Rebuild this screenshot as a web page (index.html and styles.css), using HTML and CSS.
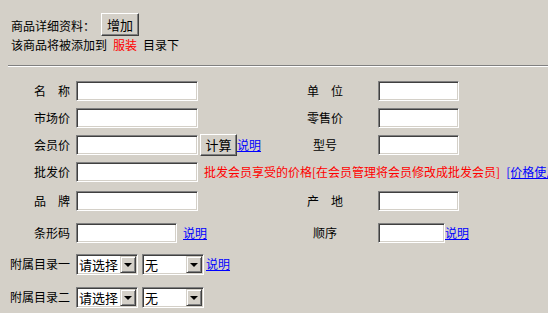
FILE: index.html
```html
<!DOCTYPE html>
<html lang="zh-CN">
<head>
<meta charset="utf-8">
<title>商品详细资料</title>
<link rel="stylesheet" href="styles.css">
</head>
<body>
<div class="head">
  <div class="line1"><span class="title">商品详细资料：</span><button class="btn btn-add" type="button">增加</button></div>
  <div class="line2">该商品将被添加到<span class="red cat">服装</span>目录下</div>
</div>
<hr class="rule">
<div class="form">
  <div class="lbl">名　称</div>
  <div class="fld"><input class="txt w122" type="text"></div>
  <div class="lbl2">单　位</div>
  <div class="fld2"><input class="txt w81" type="text"></div>

  <div class="lbl">市场价</div>
  <div class="fld"><input class="txt w122" type="text"></div>
  <div class="lbl2">零售价</div>
  <div class="fld2"><input class="txt w81" type="text"></div>

  <div class="lbl">会员价</div>
  <div class="fld"><input class="txt w122" type="text"><button class="btn btn-calc" type="button">计算</button><a class="lnk" href="#">说明</a></div>
  <div class="lbl2">型号</div>
  <div class="fld2"><input class="txt w81" type="text"></div>

  <div class="lbl">批发价</div>
  <div class="fld span3"><input class="txt w122" type="text"><span class="red note">批发会员享受的价格[在会员管理将会员修改成批发会员]</span><a class="lnk note-link" href="#">[价格使用说明]</a></div>

  <div class="lbl">品　牌</div>
  <div class="fld"><input class="txt w122" type="text"></div>
  <div class="lbl2">产　地</div>
  <div class="fld2"><input class="txt w81" type="text"></div>

  <div class="lbl">条形码</div>
  <div class="fld"><input class="txt w101" type="text"><a class="lnk gap6" href="#">说明</a></div>
  <div class="lbl2">顺序</div>
  <div class="fld2"><input class="txt w67" type="text"><a class="lnk" href="#">说明</a></div>

  <div class="lbl">附属目录一</div>
  <div class="fld span3"><span class="sel"><select><option>请选择</option></select><span class="arrow"></span></span><span class="sel gap4"><select><option>无</option></select><span class="arrow"></span></span><a class="lnk gap2" href="#">说明</a></div>

  <div class="lbl">附属目录二</div>
  <div class="fld span3"><span class="sel"><select><option>请选择</option></select><span class="arrow"></span></span><span class="sel gap4"><select><option>无</option></select><span class="arrow"></span></span></div>
</div>
</body>
</html>
```
FILE: styles.css
```css
html, body {
  margin: 0;
  padding: 0;
  overflow: hidden;
  background: #d4d0c8;
  color: #000;
  font-family: "Noto Sans CJK SC", sans-serif;
  font-size: 12px;
  line-height: 16px;
}

.head {
  padding: 13px 0 0 11px;
}

.line1 {
  display: flex;
  align-items: flex-start;
  height: 23px;
}

.title {
  width: 90px;
  padding-top: 5px;
}

.btn {
  box-sizing: border-box;
  padding: 0;
  margin: 0;
  background: #d4d0c8;
  color: #000;
  font-family: "Noto Sans CJK SC", sans-serif;
  font-size: 12px;
  line-height: 16px;
  border: 1px solid;
  border-color: #ffffff #404040 #404040 #ffffff;
  box-shadow: inset -1px -1px #808080, inset 1px 1px #d4d0c8;
}

.btn-add {
  width: 38px;
  height: 23px;
  font-size: 13px;
}

.btn-calc {
  width: 37px;
  height: 22px;
  margin-left: 2px;
  font-size: 13px;
  flex: none;
}

.line2 {
  margin-top: 1px;
  white-space: nowrap;
}

.cat {
  margin: 0 6px;
}

.red {
  color: #ff0000;
}

.rule {
  margin: 12px 0 0 8px;
  height: 0;
  border: 0;
  border-top: 1px solid #808080;
  border-bottom: 1px solid #ffffff;
}

.form {
  margin: 14px 0 0 10px;
  display: grid;
  grid-template-columns: 66px 224px 50px 1fr;
  grid-template-rows: 27px 27px 27px 29px 32px 31px 33px 26px;
  align-items: start;
}

.lbl {
  text-align: right;
  padding-right: 6px;
  padding-top: 2px;
  white-space: nowrap;
}

.lbl2 {
  text-align: center;
  padding-top: 2px;
  white-space: nowrap;
}

.fld, .fld2 {
  display: flex;
  align-items: center;
  height: 20px;
  white-space: nowrap;
}

.fld2 {
  padding-left: 28px;
}

.span3 {
  grid-column: 2 / 5;
}

.txt {
  box-sizing: border-box;
  height: 20px;
  margin: 0;
  padding: 0 2px;
  background: #fff;
  border: 1px solid;
  border-color: #808080 #ffffff #ffffff #808080;
  box-shadow: inset 1px 1px #404040, inset -1px -1px #d4d0c8;
  font-family: "Noto Sans CJK SC", sans-serif;
  font-size: 12px;
  flex: none;
}

.w122 { width: 122px; }
.w101 { width: 101px; }
.w81 { width: 81px; }
.w67 { width: 67px; }

.lnk {
  color: #0000ff;
  text-decoration: underline;
}

.gap6 { margin-left: 6px; }
.gap4 { margin-left: 4px; }
.gap2 { margin-left: 2px; }

.note {
  margin-left: 6px;
}

.note-link {
  margin-left: 6px;
}

.sel {
  position: relative;
  display: inline-block;
  width: 62px;
  height: 21px;
  flex: none;
}

.sel select {
  appearance: none;
  -webkit-appearance: none;
  box-sizing: border-box;
  width: 62px;
  height: 21px;
  margin: 0;
  padding: 0 0 0 2px;
  background: #fff;
  color: #000;
  border: 1px solid;
  border-color: #808080 #ffffff #ffffff #808080;
  box-shadow: inset 1px 1px #404040, inset -1px -1px #d4d0c8;
  font-family: "Noto Sans CJK SC", sans-serif;
  font-size: 13px;
  border-radius: 0;
}

.arrow {
  position: absolute;
  right: 2px;
  top: 2px;
  box-sizing: border-box;
  width: 16px;
  height: 17px;
  background: #d4d0c8;
  border: 1px solid;
  border-color: #d4d0c8 #404040 #404040 #d4d0c8;
  box-shadow: inset 1px 1px #ffffff, inset -1px -1px #808080;
}

.arrow::after {
  content: "";
  position: absolute;
  left: 3px;
  top: 6px;
  width: 0;
  height: 0;
  border-left: 4px solid transparent;
  border-right: 4px solid transparent;
  border-top: 4px solid #000;
}
```
